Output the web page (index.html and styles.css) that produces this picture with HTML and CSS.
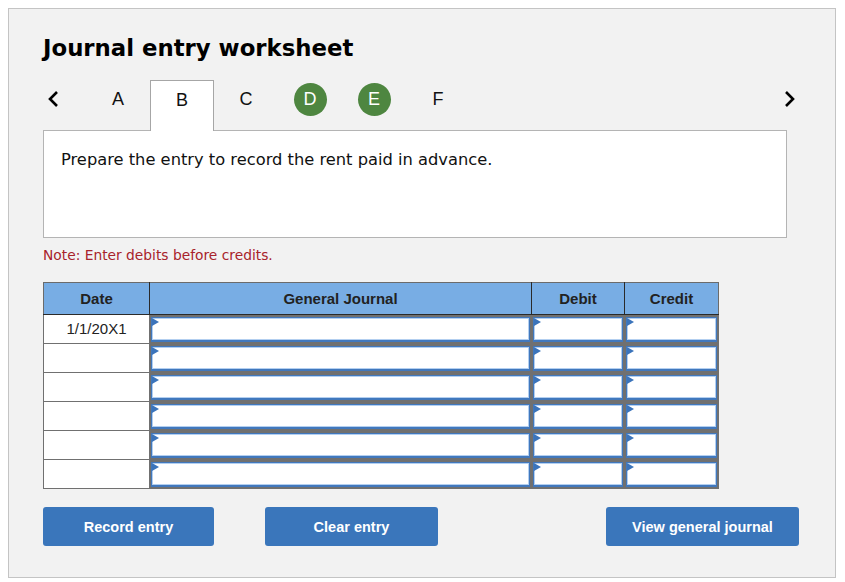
FILE: index.html
```html
<!DOCTYPE html>
<html lang="en">
<head>
    <meta charset="UTF-8">
    <title>Journal entry worksheet</title>
    <link rel="stylesheet" href="styles.css">
</head>
<body>
    <div class="worksheet">
        <h1 class="worksheet-title">Journal entry worksheet</h1>

        <div class="tabs">
            <div class="nav nav-prev">
                <svg width="14" height="18" viewBox="0 0 14 18"><polyline points="11,2 4,9 11,16" fill="none" stroke="#000" stroke-width="2.6"/></svg>
            </div>
            <div class="tab">A</div>
            <div class="tab active">B</div>
            <div class="tab">C</div>
            <div class="tab"><span class="done">D</span></div>
            <div class="tab"><span class="done">E</span></div>
            <div class="tab">F</div>
            <div class="tabs-spacer"></div>
            <div class="nav nav-next">
                <svg width="14" height="18" viewBox="0 0 14 18"><polyline points="3,2 10,9 3,16" fill="none" stroke="#000" stroke-width="2.6"/></svg>
            </div>
        </div>

        <div class="prompt">
            <p>Prepare the entry to record the rent paid in advance.</p>
        </div>

        <p class="note">Note: Enter debits before credits.</p>

        <table class="journal">
            <thead>
                <tr>
                    <th class="col-date">Date</th>
                    <th class="col-account">General Journal</th>
                    <th class="col-debit">Debit</th>
                    <th class="col-credit">Credit</th>
                </tr>
            </thead>
            <tbody id="journalBody">
                <tr>
                    <td class="date">1/1/20X1</td>
                    <td class="entry"><div class="field"></div></td>
                    <td class="entry"><div class="field"></div></td>
                    <td class="entry"><div class="field"></div></td>
                </tr>
                <tr>
                    <td class="date"></td>
                    <td class="entry"><div class="field"></div></td>
                    <td class="entry"><div class="field"></div></td>
                    <td class="entry"><div class="field"></div></td>
                </tr>
                <tr>
                    <td class="date"></td>
                    <td class="entry"><div class="field"></div></td>
                    <td class="entry"><div class="field"></div></td>
                    <td class="entry"><div class="field"></div></td>
                </tr>
                <tr>
                    <td class="date"></td>
                    <td class="entry"><div class="field"></div></td>
                    <td class="entry"><div class="field"></div></td>
                    <td class="entry"><div class="field"></div></td>
                </tr>
                <tr>
                    <td class="date"></td>
                    <td class="entry"><div class="field"></div></td>
                    <td class="entry"><div class="field"></div></td>
                    <td class="entry"><div class="field"></div></td>
                </tr>
                <tr>
                    <td class="date"></td>
                    <td class="entry"><div class="field"></div></td>
                    <td class="entry"><div class="field"></div></td>
                    <td class="entry"><div class="field"></div></td>
                </tr>
            </tbody>
        </table>

        <div class="actions">
            <button class="btn btn-record">Record entry</button>
            <button class="btn btn-clear">Clear entry</button>
            <button class="btn btn-view">View general journal</button>
        </div>
    </div>
</body>
</html>
```

FILE: styles.css
```css
body {
    margin: 8px;
    background: #fff;
    font-family: "Liberation Sans", Arial, sans-serif;
    color: #222;
}

.worksheet {
    width: 828px;
    height: 570px;
    box-sizing: border-box;
    border: 1px solid #c4c4c4;
    background: #f2f2f2;
    padding: 0 36px 0 34px;
}

.worksheet-title {
    font-family: "DejaVu Sans", Verdana, sans-serif;
    font-size: 22.8px;
    font-weight: bold;
    color: #000;
    margin: 26px 0 0;
    line-height: 26px;
}

.tabs {
    display: flex;
    height: 50px;
    margin-top: 19px;
}

.nav {
    display: flex;
    align-items: center;
    padding-bottom: 12px;
}

.nav-prev {
    width: 43px;
    padding-left: 3px;
    box-sizing: border-box;
}

.nav-next {
    padding-right: 2px;
}

.tabs-spacer {
    flex: 1;
}

.tab {
    width: 64px;
    display: flex;
    align-items: center;
    justify-content: center;
    padding-bottom: 12px;
    font-size: 18px;
    color: #111;
    box-sizing: border-box;
}

.tab.active {
    background: #fff;
    border: 1px solid #a6a6a6;
    border-bottom: none;
    height: 51px;
    padding-bottom: 11px;
    position: relative;
    z-index: 1;
}

.done {
    width: 33px;
    height: 33px;
    border-radius: 50%;
    background: #4e8640;
    color: #fff;
    display: flex;
    align-items: center;
    justify-content: center;
    font-size: 18px;
}

.prompt {
    width: 744px;
    height: 108px;
    box-sizing: border-box;
    background: #fff;
    border: 1px solid #b4b4b4;
    padding: 19px 17px;
}

.prompt p {
    margin: 0;
    font-family: "DejaVu Sans", Verdana, sans-serif;
    font-size: 16.3px;
    color: #111;
}

.note {
    margin: 9px 0 0;
    font-family: "DejaVu Sans", Verdana, sans-serif;
    font-size: 13.8px;
    color: #a8232b;
}

.journal {
    margin-top: 19px;
    border-collapse: collapse;
    width: 675px;
    table-layout: fixed;
}

.journal th {
    background: #78ade4;
    height: 31px;
    font-size: 15px;
    font-weight: bold;
    color: #222;
    border: 1px solid #2a2a2a;
    border-top-color: #6b6b6b;
    padding: 0;
}

.journal th:first-child {
    border-left-color: #6b6b6b;
}

.journal th:last-child {
    border-right-color: #6b6b6b;
}

.col-date { width: 105px; }
.col-account { width: 381px; }
.col-debit { width: 92px; }
.col-credit { width: 93px; }

.journal td {
    padding: 0;
    border: 1px solid #707070;
    background: #fff;
}

.journal td.date {
    text-align: center;
    font-size: 15px;
    color: #222;
    vertical-align: top;
    padding-top: 5px;
    height: 23px;
}

.journal td.entry {
    padding: 1px;
    background: #707070;
}

.field {
    position: relative;
    height: 22px;
    background: #fff;
    border: 1px solid #4178bd;
    border-width: 1px 1px 2px 1px;
    box-shadow: inset 0 0 0 1px #b3cff0;
}

.field::before {
    content: "";
    position: absolute;
    left: 0;
    top: 0;
    border-left: 7px solid #3b74bb;
    border-top: 4px solid transparent;
    border-bottom: 4px solid transparent;
}

.actions {
    display: flex;
    margin-top: 18px;
}

.btn {
    height: 39px;
    border: none;
    border-radius: 3px;
    background: #3a76bb;
    color: #fff;
    font-family: "Liberation Sans", Arial, sans-serif;
    font-size: 14.5px;
    font-weight: bold;
}

.btn-record { width: 171px; }
.btn-clear { width: 173px; margin-left: 51px; }
.btn-view { width: 193px; margin-left: auto; }
```
